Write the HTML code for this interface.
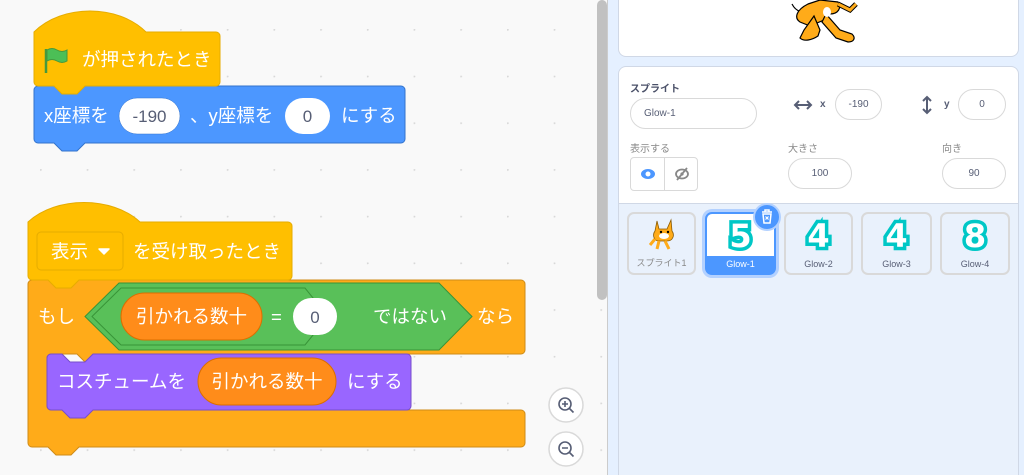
<!DOCTYPE html>
<html><head><meta charset="utf-8"><style>
*{margin:0;padding:0;box-sizing:border-box}
html,body{width:1024px;height:475px;overflow:hidden}
body{background:#f9f9f9;font-family:"Liberation Sans","Noto Sans CJK JP",sans-serif;position:relative}
.abs{position:absolute}
.inp{position:absolute;background:#fff;border:1px solid #d9d9d9;border-radius:16px;font-size:10px;color:#575e75;display:flex;align-items:center;justify-content:center}
.lbl{position:absolute;font-size:10px;color:#575e75}
.tile{position:absolute;top:212px;height:63px;border:2px solid #d9d9d9;border-radius:7px;background:#e9f1fc;font-size:9px;color:#575e75;text-align:center}
.tile .n{position:absolute;left:0;right:0;bottom:4px}
.tile .g{position:absolute;left:0;right:0;top:2px;font-size:32px;font-weight:bold;color:#fff;-webkit-text-stroke:7px #00c7c6;paint-order:stroke fill;line-height:40px;font-family:"DejaVu Sans",sans-serif}
</style></head><body>
<svg class="abs" style="left:0;top:0" width="610" height="475" font-family="Liberation Sans, Noto Sans CJK JP, sans-serif">
<defs><pattern id="d" x="40" y="29" width="46.7" height="46.7" patternUnits="userSpaceOnUse"><circle cx="0.8" cy="0.8" r="1" fill="#d8d8d8"/></pattern></defs>
<rect width="610" height="475" fill="#f9f9f9"/><rect width="610" height="475" fill="url(#d)"/>
<path d="M38,86 H401 a4,4 0 0 1 4,4 V139 a4,4 0 0 1 -4,4 H85 l-8,8 h-15 l-8,-8 H38 a4,4 0 0 1 -4,-4 V90 a4,4 0 0 1 4,-4z" fill="#4c97ff" stroke="#3373cc"/>
<path d="M34,32 C62,4 118,4 146,32 H216 a4,4 0 0 1 4,4 V82 a4,4 0 0 1 -4,4 H85 l-8,8 h-15 l-8,-8 H38 a4,4 0 0 1 -4,-4z" fill="#ffbf00" stroke="#e6ac00"/>
<path d="M46,49 V73" stroke="#45993d" stroke-width="2.5"/><path d="M47,50 q5,-3 10,0 t10,0 v11 q-5,3 -10,0 t-10,0z" fill="#4cbf56" stroke="#45993d" stroke-width="1"/>
<text x="82" y="66" font-size="18.5" fill="#fff">が押されたとき</text>
<text x="44" y="122" font-size="18.5" fill="#fff">x座標を</text>
<rect x="119" y="98" width="61" height="36" rx="18" fill="#fff" stroke="#3373cc" stroke-width="0.5"/>
<text x="149.5" y="122" font-size="17" fill="#575e75" text-anchor="middle">-190</text>
<text x="190" y="122" font-size="18.5" fill="#fff">、y座標を</text>
<rect x="285" y="98" width="45" height="36" rx="18" fill="#fff"/>
<text x="307.5" y="122" font-size="17" fill="#575e75" text-anchor="middle">0</text>
<text x="341" y="122" font-size="18.5" fill="#fff">にする</text>
<path d="M32,280 H521 a4,4 0 0 1 4,4 V350 a4,4 0 0 1 -4,4 H108 l-8,8 h-15 l-8,-8 H51 a4,4 0 0 0 -4,4 V406 a4,4 0 0 0 4,4 H521 a4,4 0 0 1 4,4 V443 a4,4 0 0 1 -4,4 H79 l-8,8 h-15 l-8,-8 H32 a4,4 0 0 1 -4,-4 V284 a4,4 0 0 1 4,-4z" fill="#ffab19" stroke="#cf8b17"/>
<path d="M51,354 H62 l8,8 h15 l8,-8 H407 a4,4 0 0 1 4,4 V406 a4,4 0 0 1 -4,4 H93 l-8,8 h-15 l-8,-8 H51 a4,4 0 0 1 -4,-4 V358 a4,4 0 0 1 4,-4z" fill="#9966ff" stroke="#774dcb"/>
<text x="57" y="388" font-size="18.5" fill="#fff">コスチュームを</text>
<rect x="198" y="358" width="138" height="47" rx="23.5" fill="#ff8c1a" stroke="#db6e00"/>
<text x="267" y="388" font-size="18.5" fill="#fff" text-anchor="middle">引かれる数十</text>
<text x="347" y="388" font-size="18.5" fill="#fff">にする</text>
<path d="M28,222 C56,196 112,196 140,222 H288 a4,4 0 0 1 4,4 V276 a4,4 0 0 1 -4,4 H79 l-8,8 h-15 l-8,-8 H32 a4,4 0 0 1 -4,-4z" fill="#ffbf00" stroke="#e6ac00"/>
<rect x="37" y="232" width="86" height="38" rx="4" fill="#ffbf00" stroke="#e6ac00"/>
<text x="51" y="258" font-size="18.5" fill="#fff">表示</text>
<path d="M99,249 l5,5 l5,-5z" fill="#fff" stroke="#fff" stroke-linejoin="round" stroke-width="1.5"/>
<text x="133" y="258" font-size="18.5" fill="#fff">を受け取ったとき</text>
<text x="38" y="323" font-size="18.5" fill="#fff">もし</text>
<path d="M119,283 H439 L472,316.5 L439,350 H119 L85,316.5z" fill="#59c059" stroke="#389438"/>
<path d="M121,288 H305 L328,316.5 L305,345 H121 L92,316.5z" fill="#59c059" stroke="#389438"/>
<rect x="121" y="293" width="141" height="47" rx="23.5" fill="#ff8c1a" stroke="#db6e00"/>
<text x="191.5" y="323" font-size="18.5" fill="#fff" text-anchor="middle">引かれる数十</text>
<text x="271" y="323" font-size="18.5" fill="#fff">=</text>
<rect x="293" y="298" width="44" height="37" rx="18.5" fill="#fff"/>
<text x="315" y="323" font-size="17" fill="#575e75" text-anchor="middle">0</text>
<text x="373" y="323" font-size="18.5" fill="#fff">ではない</text>
<text x="477" y="323" font-size="18.5" fill="#fff">なら</text>
<g fill="#fff" stroke="#d9d9d9" stroke-width="1.5"><circle cx="566" cy="405" r="17"/><circle cx="566" cy="449" r="17"/></g>
<g fill="none" stroke="#575e75" stroke-width="1.6"><circle cx="565" cy="404" r="6"/><path d="M569.5,408.5 l4,4 M562,404 h6 M565,401 v6"/><circle cx="565" cy="448" r="6"/><path d="M569.5,452.5 l4,4 M562,448 h6"/></g>
<rect x="597" y="0" width="10" height="300" rx="5" fill="#c1c1c1"/>
</svg>
<div class="abs" style="left:607px;top:0;width:417px;height:475px;background:#e5f0ff;border-left:1px solid #ccc"></div>
<div class="abs" style="left:618px;top:0;width:401px;height:57px;background:#fff;border:1px solid #d0d8e6;border-top:none;border-radius:0 0 8px 8px"></div>
<svg class="abs" style="left:790px;top:0" width="80" height="46">
<path d="M2,4 C6,12 14,14 20,10" fill="#fff" stroke="#000" stroke-width="1.2"/>
<path d="M18,4 L30,0 L48,2 C52,8 48,14 40,14 L34,20 L20,26 L10,22 C4,18 6,10 18,4z" fill="#ffab19" stroke="#000" stroke-width="1.2"/>
<path d="M24,16 L14,30 L10,38 C14,42 22,40 28,36 L30,30z" fill="#ffab19" stroke="#000" stroke-width="1.2"/>
<path d="M36,14 L50,30 L62,34 C66,38 64,42 58,42 L46,38 L32,22z" fill="#ffab19" stroke="#000" stroke-width="1.2"/>
<path d="M48,4 L60,10 L66,4" fill="none" stroke="#000" stroke-width="5"/><path d="M48,4 L60,10 L66,4" fill="none" stroke="#ffab19" stroke-width="3"/>
<ellipse cx="37" cy="12" rx="4" ry="5" fill="#fff"/>
</svg>
<div class="abs" style="left:618px;top:66px;width:401px;height:409px;background:#fff;border:1px solid #d0d8e6;border-bottom:none;border-radius:8px 8px 0 0"></div>
<div class="abs" style="left:619px;top:203px;width:399px;height:272px;background:#e9f1fc;border-top:1px solid #d0d8e6"></div>
<div class="lbl" style="left:630px;top:80px;font-weight:bold;color:#4a5068">スプライト</div>
<div class="inp" style="left:630px;top:98px;width:127px;height:31px;justify-content:flex-start;padding-left:13px">Glow-1</div>
<svg class="abs" style="left:793px;top:99px" width="20" height="12"><path d="M2,6 H18 M6,2 L2,6 L6,10 M14,2 L18,6 L14,10" fill="none" stroke="#575e75" stroke-width="2"/></svg>
<div class="lbl" style="left:820px;top:99px;font-weight:bold">x</div>
<div class="inp" style="left:835px;top:89px;width:47px;height:31px">-190</div>
<svg class="abs" style="left:921px;top:95px" width="12" height="20"><path d="M6,2 V18 M2,6 L6,2 L10,6 M2,14 L6,18 L10,14" fill="none" stroke="#575e75" stroke-width="2"/></svg>
<div class="lbl" style="left:944px;top:99px;font-weight:bold">y</div>
<div class="inp" style="left:958px;top:89px;width:48px;height:31px">0</div>
<div class="lbl" style="left:630px;top:140px;color:#888">表示する</div>
<div class="abs" style="left:630px;top:157px;width:68px;height:34px;border:1px solid #d9d9d9;border-radius:4px;background:#fff"><div class="abs" style="left:33px;top:0;width:1px;height:32px;background:#d9d9d9"></div>
<svg class="abs" style="left:9px;top:9px" width="16" height="14"><ellipse cx="8" cy="7" rx="7" ry="5" fill="#4c97ff"/><circle cx="8" cy="7" r="2.5" fill="#fff"/></svg>
<svg class="abs" style="left:43px;top:9px" width="16" height="14"><ellipse cx="8" cy="7" rx="6" ry="4.5" fill="none" stroke="#888" stroke-width="1.8"/><circle cx="8" cy="7" r="1.6" fill="#888"/><path d="M3,13 L13,1" stroke="#888" stroke-width="1.8"/></svg></div>
<div class="lbl" style="left:788px;top:140px;color:#888">大きさ</div>
<div class="inp" style="left:788px;top:158px;width:64px;height:31px">100</div>
<div class="lbl" style="left:942px;top:140px;color:#888">向き</div>
<div class="inp" style="left:942px;top:158px;width:64px;height:31px">90</div>
<div class="tile" style="left:627px;width:69px">
<svg class="abs" style="left:20px;top:3px" width="28" height="34"><path d="M8,4 L10,12 L18,12 L22,3 L23,14 C26,18 24,24 18,24 L10,24 C5,24 3,18 6,14z" fill="#ffab19" stroke="#8a5a00" stroke-width="0.8"/><path d="M10,24 L8,32 M16,24 L20,32 M6,22 L1,28" stroke="#ffab19" stroke-width="3"/><ellipse cx="15" cy="19" rx="5" ry="3" fill="#fff"/><circle cx="12" cy="15" r="1.2"/><circle cx="19" cy="15" r="1.2"/></svg>
<div class="n" style="color:#888">スプライト1</div></div>
<div class="tile" style="left:705px;width:71px;border-color:#4c97ff;background:#fff;box-shadow:0 0 0 3px #b3d1ff"><div class="g">5</div><div class="abs" style="left:0;right:0;bottom:0;height:17px;background:#4c97ff;color:#fff;line-height:17px">Glow-1</div></div>
<div class="tile" style="left:784px;width:69px"><div class="g">4</div><div class="n">Glow-2</div></div>
<div class="tile" style="left:861px;width:71px"><div class="g">4</div><div class="n">Glow-3</div></div>
<div class="tile" style="left:940px;width:70px"><div class="g">8</div><div class="n">Glow-4</div></div>
<svg class="abs" style="left:752px;top:203px" width="30" height="30"><circle cx="15" cy="14" r="13" fill="#4c97ff" stroke="#b3d1ff" stroke-width="2"/><path d="M10,9 h10 M13,9 v-2 h4 v2 M11,11 h8 l-1,9 h-6z" fill="none" stroke="#fff" stroke-width="1.5"/><path d="M13.5,13.5 l3,3 M16.5,13.5 l-3,3" stroke="#fff" stroke-width="1.2"/></svg>
</body></html>
